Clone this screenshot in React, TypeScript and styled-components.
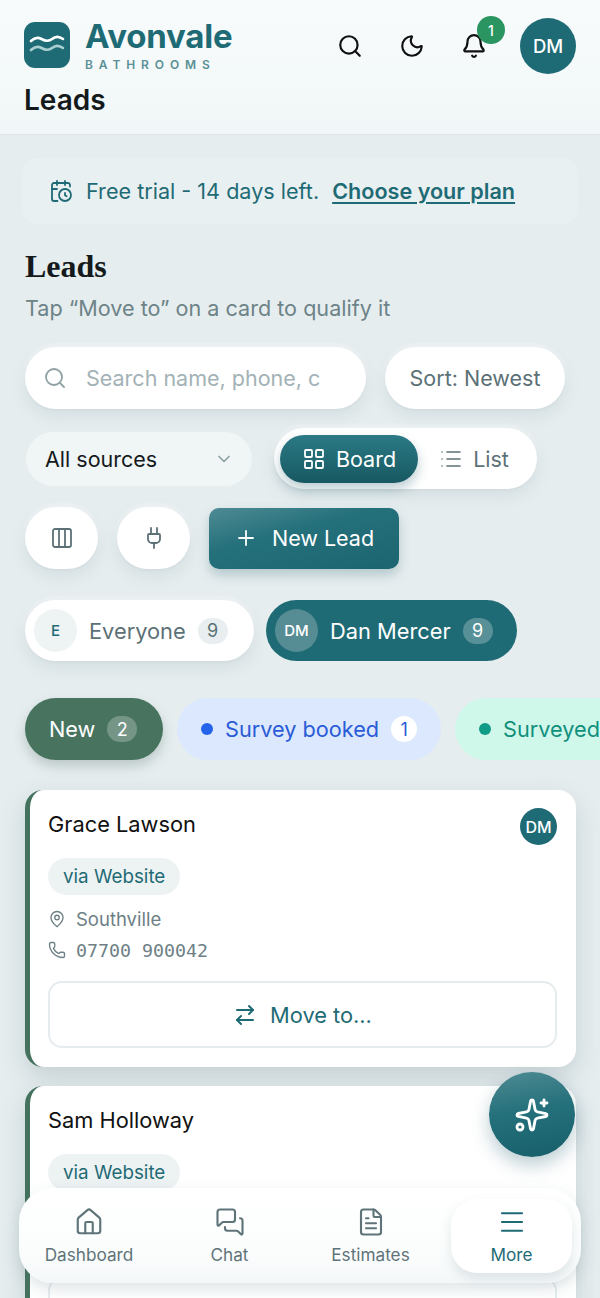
import React from 'react';
import styled, { createGlobalStyle } from 'styled-components';
import {
  ArrowRightLeft,
  Bell,
  CalendarClock,
  ChevronDown,
  Columns3,
  FileText,
  House,
  LayoutGrid,
  List,
  MapPin,
  Menu,
  MessagesSquare,
  Moon,
  Phone,
  Plug,
  Plus,
  Search,
  Sparkles,
} from 'lucide-react';

const teal = '#1f6b75';
const raised = '0 7px 16px rgba(90, 120, 130, 0.13), 0 1px 3px rgba(90, 120, 130, 0.08), 0 -2px 6px rgba(255, 255, 255, 0.6)';

const GlobalStyle = createGlobalStyle`
  html, body {
    margin: 0;
    padding: 0;
    height: 100%;
    overflow: hidden;
    background: #e6edef;
    font-family: Inter, "Liberation Sans", sans-serif;
  }
  * { box-sizing: border-box; }
`;

const Page = styled.div`
  position: relative;
  width: 600px;
  height: 1298px;
  overflow: hidden;
  background: #e6edef;
`;

const Header = styled.header`
  height: 135px;
  padding: 18px 24px 0;
  background: linear-gradient(180deg, #f8fbfb 0%, #f1f7f8 100%);
  border-bottom: 1px solid #dfe6e8;
`;

const HeaderTop = styled.div`
  display: flex;
  align-items: center;
  justify-content: space-between;
  height: 56px;
`;

const Brand = styled.div`
  display: flex;
  align-items: center;
  gap: 15px;
`;

const LogoTile = styled.div`
  width: 46px;
  height: 46px;
  margin-top: -2px;
  border-radius: 11px;
  background: ${teal};
  display: flex;
  align-items: center;
  justify-content: center;
`;

const BrandText = styled.div`
  display: flex;
  flex-direction: column;
  margin-top: -2px;
`;

const BrandName = styled.div`
  font-size: 33px;
  line-height: 36px;
  font-weight: 700;
  letter-spacing: -0.2px;
  color: ${teal};
`;

const BrandSub = styled.div`
  font-size: 12px;
  line-height: 14px;
  font-weight: 600;
  letter-spacing: 5.9px;
  color: #5a9097;
  margin-top: 4px;
`;

const HeaderActions = styled.div`
  display: flex;
  align-items: center;
`;

const HeaderIcon = styled.div`
  position: relative;
  width: 62px;
  height: 56px;
  display: flex;
  align-items: center;
  justify-content: center;
  color: #111;
`;

const Badge = styled.span`
  position: absolute;
  top: -2px;
  left: 34px;
  width: 28px;
  height: 28px;
  border-radius: 50%;
  background: #2a9560;
  color: #fff;
  font-size: 14px;
  font-weight: 500;
  display: flex;
  align-items: center;
  justify-content: center;
`;

const Avatar = styled.div<{ $size: number; $font: number }>`
  width: ${(p) => p.$size}px;
  height: ${(p) => p.$size}px;
  border-radius: 50%;
  background: ${teal};
  color: #fff;
  font-size: ${(p) => p.$font}px;
  font-weight: 500;
  display: flex;
  align-items: center;
  justify-content: center;
  flex-shrink: 0;
`;

const HeaderAvatar = styled(Avatar)`
  margin-left: 15px;
`;

const HeaderTitle = styled.div`
  font-size: 28px;
  line-height: 32px;
  font-weight: 600;
  color: #14191b;
  margin-top: 10px;
`;

const Main = styled.main`
  padding: 23px 24px 0 25px;
`;

const TrialBanner = styled.div`
  margin: 0 -2px 0 -3px;
  height: 66px;
  border-radius: 16px;
  background: #e9f0f2;
  display: flex;
  align-items: center;
  padding-left: 27px;
  color: ${teal};
  font-size: 21.6px;
`;

const TrialText = styled.span`
  margin-left: 13px;
`;

const TrialLink = styled.a`
  margin-left: 13px;
  font-weight: 600;
  text-decoration: underline;
  text-underline-offset: 3px;
`;

const PageTitle = styled.h1`
  margin: 23px 0 0;
  font-family: "Liberation Serif", serif;
  font-size: 32px;
  line-height: 38px;
  font-weight: 700;
  color: #14191b;
`;

const Subtitle = styled.p`
  margin: 8px 0 0;
  font-size: 21.6px;
  line-height: 30px;
  color: #6d8388;
`;

const ToolRow = styled.div<{ $gap: number; $top: number }>`
  display: flex;
  align-items: center;
  gap: ${(p) => p.$gap}px;
  margin-top: ${(p) => p.$top}px;
`;

const SearchBox = styled.div`
  width: 341px;
  height: 62px;
  border-radius: 31px;
  background: #fff;
  box-shadow: ${raised};
  display: flex;
  align-items: center;
  padding-left: 18px;
  gap: 19px;
  color: #8ea0a4;
`;

const Placeholder = styled.span`
  font-size: 21.5px;
  color: #a3b2b6;
`;

const SortButton = styled.div`
  width: 180px;
  height: 62px;
  border-radius: 31px;
  background: #fff;
  box-shadow: ${raised};
  display: flex;
  align-items: center;
  justify-content: center;
  font-size: 21.5px;
  color: #5c7176;
`;

const SourceSelect = styled.div`
  margin-left: 1px;
  width: 226px;
  height: 54px;
  border-radius: 27px;
  background: #f0f5f6;
  display: flex;
  align-items: center;
  justify-content: space-between;
  padding: 0 18px 0 19px;
  font-size: 21.5px;
  color: #14191b;
`;

const ViewToggle = styled.div`
  width: 263px;
  height: 61px;
  border-radius: 31px;
  background: #fff;
  box-shadow: ${raised};
  display: flex;
  align-items: center;
  padding-left: 6px;
`;

const ViewOption = styled.div<{ $active?: boolean }>`
  width: ${(p) => (p.$active ? '138px' : '112px')};
  height: 48px;
  border-radius: 24px;
  display: flex;
  align-items: center;
  justify-content: center;
  gap: 10px;
  font-size: 21.5px;
  color: ${(p) => (p.$active ? '#fff' : '#5c7176')};
  background: ${(p) => (p.$active ? 'linear-gradient(180deg, #2b7a85 0%, #175862 100%)' : 'transparent')};
  box-shadow: ${(p) => (p.$active ? '0 6px 12px rgba(31, 90, 105, 0.3)' : 'none')};
`;

const RoundButton = styled.div`
  width: 73px;
  height: 62px;
  border-radius: 31px;
  background: #fff;
  box-shadow: ${raised};
  display: flex;
  align-items: center;
  justify-content: center;
  color: #5c7176;
`;

const NewLeadButton = styled.div`
  width: 190px;
  height: 61px;
  border-radius: 10px;
  background: linear-gradient(165deg, #4f8b94 0%, #24707b 40%, #1c6570 100%);
  box-shadow: 0 6px 12px rgba(31, 90, 105, 0.25);
  display: flex;
  align-items: center;
  justify-content: center;
  gap: 14px;
  font-size: 21.5px;
  font-weight: 400;
  color: #fff;
`;

const PersonChip = styled.div<{ $active?: boolean; $width: number }>`
  width: ${(p) => p.$width}px;
  height: 61px;
  border-radius: 31px;
  display: flex;
  align-items: center;
  padding-left: 9px;
  font-size: 21.8px;
  background: ${(p) => (p.$active ? teal : '#fff')};
  color: ${(p) => (p.$active ? '#fff' : '#5c7176')};
  box-shadow: ${(p) => (p.$active ? 'none' : raised)};
`;

const ChipAvatar = styled.span<{ $active?: boolean }>`
  width: 43px;
  height: 43px;
  border-radius: 50%;
  display: flex;
  align-items: center;
  justify-content: center;
  font-size: 15px;
  font-weight: 500;
  margin-right: 12px;
  background: ${(p) => (p.$active ? '#568c94' : '#eef3f4')};
  color: ${(p) => (p.$active ? '#fff' : teal)};
`;

const Count = styled.span<{ $tone: 'light' | 'dark' | 'white'; $ink?: string }>`
  width: ${(p) => (p.$tone === 'white' ? '26px' : '30px')};
  height: 26px;
  border-radius: 13px;
  margin-left: 12px;
  display: flex;
  align-items: center;
  justify-content: center;
  font-size: 18px;
  background: ${(p) =>
    p.$tone === 'light' ? '#e9eff0' : p.$tone === 'dark' ? 'rgba(255, 255, 255, 0.25)' : '#fff'};
  color: ${(p) => p.$ink || (p.$tone === 'dark' ? '#fff' : '#5c7176')};
`;

const StageRow = styled.div`
  display: flex;
  gap: 14px;
  margin-top: 37px;
  width: 640px;
`;

const StagePill = styled.div<{ $bg: string; $ink: string; $width: number; $shadow?: boolean }>`
  width: ${(p) => p.$width}px;
  height: 62px;
  flex-shrink: 0;
  border-radius: 31px;
  display: flex;
  align-items: center;
  padding-left: 24px;
  font-size: 21.7px;
  font-weight: 400;
  background: ${(p) => p.$bg};
  color: ${(p) => p.$ink};
  box-shadow: ${(p) => (p.$shadow ? '0 6px 12px rgba(60, 90, 80, 0.25)' : 'none')};
`;

const StageDot = styled.span<{ $color: string }>`
  width: 12px;
  height: 12px;
  border-radius: 50%;
  background: ${(p) => p.$color};
  margin-right: 12px;
`;

const CardList = styled.div`
  margin-top: 30px;
  display: flex;
  flex-direction: column;
  gap: 19px;
`;

const Card = styled.article`
  width: 551px;
  border-radius: 18px;
  border-left: 5px solid #44725e;
  background: #fff;
  box-shadow: 0 10px 24px rgba(80, 110, 120, 0.22);
  padding: 18px 19px 19px 18px;
`;

const CardHead = styled.div`
  display: flex;
  align-items: flex-start;
  justify-content: space-between;
  min-height: 50px;
`;

const CardName = styled.div`
  font-size: 21.8px;
  line-height: 32px;
  font-weight: 400;
  color: #111;
`;

const SourceTag = styled.span`
  display: inline-flex;
  align-items: center;
  height: 37px;
  padding: 0 15px;
  border-radius: 19px;
  background: #edf2f3;
  font-size: 18.8px;
  font-weight: 400;
  color: ${teal};
`;

const MetaRow = styled.div<{ $mono?: boolean; $top: number }>`
  display: flex;
  align-items: center;
  gap: 10px;
  height: 24px;
  margin-top: ${(p) => p.$top}px;
  color: #6d8085;
  font-size: ${(p) => (p.$mono ? '18.3px' : '18.5px')};
  font-family: ${(p) => (p.$mono ? '"DejaVu Sans Mono", monospace' : 'inherit')};
`;

const MoveButton = styled.div<{ $top: number }>`
  margin-top: ${(p) => p.$top}px;
  height: 67px;
  border: 2px solid #e6ecee;
  border-radius: 14px;
  display: flex;
  align-items: center;
  justify-content: center;
  gap: 13px;
  font-size: 21.8px;
  font-weight: 400;
  color: ${teal};
`;

const Fab = styled.div`
  position: absolute;
  left: 489px;
  top: 1072px;
  width: 86px;
  height: 85px;
  border-radius: 50%;
  background: linear-gradient(170deg, #4f8b94 0%, #24707b 45%, #175f6a 100%);
  box-shadow: 0 8px 18px rgba(31, 90, 105, 0.3);
  display: flex;
  align-items: center;
  justify-content: center;
  color: #fff;
`;

const BottomNav = styled.nav`
  position: absolute;
  left: 19px;
  top: 1188px;
  width: 562px;
  height: 95px;
  border-radius: 34px;
  background: linear-gradient(180deg, #fff 0%, #fbfdfd 70%, #f4f7f8 100%);
  box-shadow: 0 6px 16px rgba(90, 120, 130, 0.2);
  display: grid;
  grid-template-columns: 140px 141px 141px 1fr;
  padding: 11px 9px 10px 0;
`;

const NavItem = styled.div<{ $active?: boolean }>`
  display: flex;
  flex-direction: column;
  align-items: center;
  justify-content: center;
  gap: 7px;
  font-size: 17.2px;
  border-radius: 26px;
  margin-left: ${(p) => (p.$active ? '10px' : '0')};
  color: ${(p) => (p.$active ? teal : '#5f7479')};
  background: ${(p) => (p.$active ? '#fff' : 'transparent')};
  box-shadow: ${(p) => (p.$active ? '0 6px 12px rgba(90, 120, 130, 0.16)' : 'none')};
`;

const LogoWaves = () => (
  <svg width="36" height="28" viewBox="0 0 36 28" fill="none" strokeWidth="2.6" strokeLinecap="round">
    <path d="M2 10c4-4 7-4 10.500-2s7 3 10.500 0 7-3 11 0" stroke="#fff" />
    <path d="M2 19c4-4 7-4 10.500-2s7 3 10.500 0 7-3 11 0" stroke="#a9cfd0" />
  </svg>
);

const navItems = [
  { label: 'Dashboard', Icon: House },
  { label: 'Chat', Icon: MessagesSquare },
  { label: 'Estimates', Icon: FileText },
  { label: 'More', Icon: Menu, active: true },
];

export default function App() {
  return (
    <Page>
      <GlobalStyle />
      <Header>
        <HeaderTop>
          <Brand>
            <LogoTile>
              <LogoWaves />
            </LogoTile>
            <BrandText>
              <BrandName>Avonvale</BrandName>
              <BrandSub>BATHROOMS</BrandSub>
            </BrandText>
          </Brand>
          <HeaderActions>
            <HeaderIcon><Search size={26} strokeWidth={2} /></HeaderIcon>
            <HeaderIcon><Moon size={26} strokeWidth={2} /></HeaderIcon>
            <HeaderIcon>
              <Bell size={26} strokeWidth={2} />
              <Badge>1</Badge>
            </HeaderIcon>
            <HeaderAvatar $size={56} $font={18.5}>DM</HeaderAvatar>
          </HeaderActions>
        </HeaderTop>
        <HeaderTitle>Leads</HeaderTitle>
      </Header>

      <Main>
        <TrialBanner>
          <CalendarClock size={24} strokeWidth={1.8} />
          <TrialText>Free trial - 14 days left.</TrialText>
          <TrialLink>Choose your plan</TrialLink>
        </TrialBanner>

        <PageTitle>Leads</PageTitle>
        <Subtitle>Tap “Move to” on a card to qualify it</Subtitle>

        <ToolRow $gap={19} $top={24}>
          <SearchBox>
            <Search size={24} strokeWidth={1.8} />
            <Placeholder>Search name, phone, c</Placeholder>
          </SearchBox>
          <SortButton>Sort: Newest</SortButton>
        </ToolRow>

        <ToolRow $gap={22} $top={19}>
          <SourceSelect>
            All sources
            <ChevronDown size={20} color="#8ea0a4" />
          </SourceSelect>
          <ViewToggle>
            <ViewOption $active>
              <LayoutGrid size={24} strokeWidth={1.8} />
              Board
            </ViewOption>
            <ViewOption>
              <List size={24} strokeWidth={1.6} />
              List
            </ViewOption>
          </ViewToggle>
        </ToolRow>

        <ToolRow $gap={19} $top={18}>
          <RoundButton><Columns3 size={24} strokeWidth={1.8} /></RoundButton>
          <RoundButton><Plug size={24} strokeWidth={1.8} /></RoundButton>
          <NewLeadButton>
            <Plus size={24} strokeWidth={1.8} />
            New Lead
          </NewLeadButton>
        </ToolRow>

        <ToolRow $gap={12} $top={31}>
          <PersonChip $width={229}>
            <ChipAvatar>E</ChipAvatar>
            Everyone
            <Count $tone="light">9</Count>
          </PersonChip>
          <PersonChip $active $width={251}>
            <ChipAvatar $active>DM</ChipAvatar>
            Dan Mercer
            <Count $tone="dark">9</Count>
          </PersonChip>
        </ToolRow>

        <StageRow>
          <StagePill $bg="#47735f" $ink="#fff" $width={138} $shadow>
            New
            <Count $tone="dark">2</Count>
          </StagePill>
          <StagePill $bg="#dbe8fd" $ink="#2a5bd7" $width={264}>
            <StageDot $color="#2563eb" />
            Survey booked
            <Count $tone="white" $ink="#2a5bd7">1</Count>
          </StagePill>
          <StagePill $bg="#cff7ea" $ink="#0f8f7c" $width={220}>
            <StageDot $color="#0f9b85" />
            Surveyed
          </StagePill>
        </StageRow>

        <CardList>
          <Card>
            <CardHead>
              <CardName>Grace Lawson</CardName>
              <Avatar $size={37} $font={16}>DM</Avatar>
            </CardHead>
            <SourceTag>via Website</SourceTag>
            <MetaRow $top={12}>
              <MapPin size={18} strokeWidth={1.8} />
              Southville
            </MetaRow>
            <MetaRow $mono $top={7}>
              <Phone size={18} strokeWidth={1.8} />
              07700 900042
            </MetaRow>
            <MoveButton $top={19}>
              <ArrowRightLeft size={24} strokeWidth={2} />
              Move to...
            </MoveButton>
          </Card>

          <Card>
            <CardHead>
              <CardName>Sam Holloway</CardName>
            </CardHead>
            <SourceTag>via Website</SourceTag>
            <MoveButton $top={86} />
          </Card>
        </CardList>
      </Main>

      <Fab><Sparkles size={36} strokeWidth={1.9} /></Fab>

      <BottomNav>
        {navItems.map(({ label, Icon, active }) => (
          <NavItem key={label} $active={active}>
            <Icon size={30} strokeWidth={1.7} />
            {label}
          </NavItem>
        ))}
      </BottomNav>
    </Page>
  );
}
